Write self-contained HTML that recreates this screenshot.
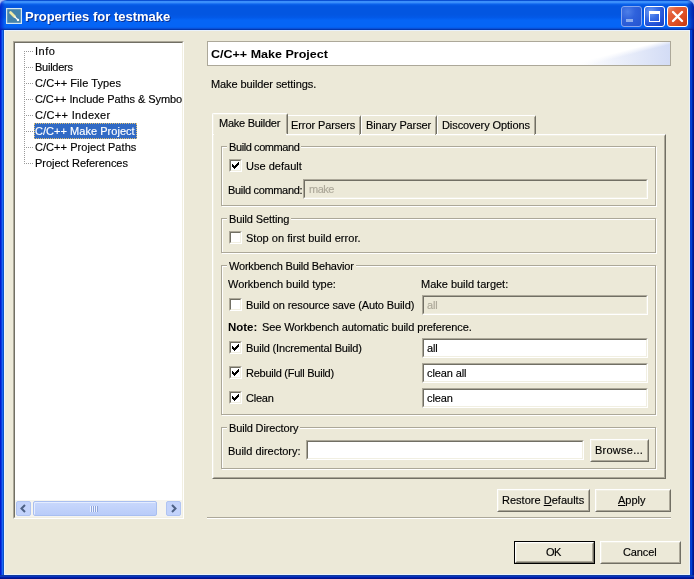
<!DOCTYPE html>
<html><head><meta charset="utf-8"><title>Properties for testmake</title>
<style>
*{box-sizing:border-box;margin:0;padding:0}
html,body{width:694px;height:579px;overflow:hidden;background:#ece9d8}
body{font-family:"Liberation Sans",sans-serif;font-size:11px;color:#000;position:relative}
.a{position:absolute}
.t{position:absolute;white-space:nowrap;line-height:13px;will-change:transform;-webkit-text-stroke:0.15px currentColor}
.ttl,.nb{-webkit-text-stroke:0}
.gl{background:#ece9d8;box-shadow:-2px 0 0 #ece9d8,2px 0 0 #ece9d8}
u{text-decoration:underline}
#tb{left:0;top:0;width:694px;height:30px;border-radius:7px 7px 0 0;background:linear-gradient(to bottom,#0a50d4 0,#0a50d4 2%,#3c90fb 5%,#3a8efa 8.5%,#1c72f2 12%,#075ee8 15.5%,#0356e1 20%,#0356e1 48%,#0359e8 58%,#0565f6 68%,#0565f6 88%,#0560ee 91.5%,#0a50d6 95%,#0033a8 99%)}
.bd{background:#0a3fd8}
.sunk{position:absolute;border:1px solid;border-color:#aca899 #fff #fff #aca899;background:#fff}
.sunk::after{content:"";position:absolute;left:0;top:0;right:0;bottom:0;border:1px solid;border-color:#716f64 #f1efe2 #f1efe2 #716f64}
.sunk.dis{background:#ece9d8}
.ge{position:absolute;border:1px solid #fff}
.ge::after{content:"";position:absolute;left:-2px;top:-2px;right:0;bottom:0;border:1px solid #aca899}
.btn{position:absolute;border:1px solid;border-color:#fff #716f64 #716f64 #fff;background:#ece9d8}
.btn::after{content:"";position:absolute;left:0;top:0;right:0;bottom:0;border:1px solid;border-color:#f1efe2 #aca899 #aca899 #f1efe2}
.wb{position:absolute;top:6px;width:21px;height:21px;border:1px solid #fff;border-radius:3px}
.wbb{background:radial-gradient(circle at 30% 25%,#6f9cf3 0%,#3a6fe6 35%,#2050d6 70%,#1a41bd 100%)}
.wbr{background:linear-gradient(135deg,#ee9675 0%,#e4603a 25%,#dd4d22 65%,#c43810 100%)}
</style></head><body>
<div class="a" style="left:0;top:0;width:694px;height:8px;background:#a9c1f6"></div>
<div class="a" id="tb"><div class="a" style="left:0;top:0;width:5px;height:30px;border-radius:7px 0 0 0;background:linear-gradient(to right,rgba(0,25,200,.75),rgba(0,25,200,0))"></div><div class="a" style="right:0;top:0;width:7px;height:30px;border-radius:0 7px 0 0;background:linear-gradient(to left,rgba(0,20,150,.8),rgba(0,20,150,0))"></div></div>
<div class="a" style="left:0;top:30px;width:4px;height:549px;background:linear-gradient(to right,#0019cf 0 1px,#0a3de0 1px 2px,#1966f4 2px 3px,#0a52c8 3px 4px)"></div>
<div class="a" style="left:690px;top:30px;width:4px;height:549px;background:linear-gradient(to right,#0a3cc8 0 1px,#003fd6 1px 2px,#0024a8 2px 3px,#00158c 3px 4px)"></div>
<div class="a" style="left:0;top:575px;width:694px;height:4px;background:linear-gradient(to bottom,#103c9e 0 1px,#0a35c0 1px 2px,#001ea8 2px 3px,#00138c 3px 4px)"></div>
<div class="a" style="left:4px;top:30px;width:686px;height:545px;border:1px solid #e9f2fd"></div>
<svg class="a" style="left:6px;top:8px" width="16" height="16" viewBox="0 0 16 16"><rect width="16" height="16" fill="#4583ab"/><rect x="0.6" y="0.6" width="14.8" height="14.8" fill="none" stroke="#d4e7ef" stroke-width="1.2"/><path d="M4.5 4.5 L8.5 8.5" stroke="#eee9a6" stroke-width="2.6" stroke-linecap="round"/><path d="M8.5 8.5 L12 12" stroke="#fff" stroke-width="1.3"/><circle cx="12" cy="12" r="1.2" fill="#fff"/></svg>
<div class="wb" style="left:621px;border-color:#86a6ee;background:radial-gradient(circle at 30% 25%,#4d7fe8 0%,#2f62dc 40%,#2454d0 100%)"><div class="a" style="left:4px;top:12px;width:7px;height:3px;background:#8eaeee"></div></div>
<div class="wb wbb" style="left:644px"><div class="a" style="left:4px;top:4px;width:11px;height:11px;border:1px solid #fff;border-top-width:3px"></div></div>
<div class="wb wbr" style="left:667px"><svg class="a" style="left:0;top:0" width="19" height="19"><path d="M5 5 L14 14 M14 5 L5 14" stroke="#fff" stroke-width="2.4" stroke-linecap="round"/></svg></div>

<!-- tree -->
<div class="sunk" style="left:13px;top:41px;width:171px;height:478px;overflow:hidden">
<div class="a" style="left:10px;top:9px;width:1px;height:113px;background:repeating-linear-gradient(to bottom,#999 0 1px,transparent 1px 2px)"></div>
<div class="a" style="left:10px;top:9px;width:9px;height:1px;background:repeating-linear-gradient(to right,#999 0 1px,transparent 1px 2px)"></div>
<div class="a" style="left:10px;top:25px;width:9px;height:1px;background:repeating-linear-gradient(to right,#999 0 1px,transparent 1px 2px)"></div>
<div class="a" style="left:10px;top:41px;width:9px;height:1px;background:repeating-linear-gradient(to right,#999 0 1px,transparent 1px 2px)"></div>
<div class="a" style="left:10px;top:57px;width:9px;height:1px;background:repeating-linear-gradient(to right,#999 0 1px,transparent 1px 2px)"></div>
<div class="a" style="left:10px;top:73px;width:9px;height:1px;background:repeating-linear-gradient(to right,#999 0 1px,transparent 1px 2px)"></div>
<div class="a" style="left:10px;top:89px;width:9px;height:1px;background:repeating-linear-gradient(to right,#999 0 1px,transparent 1px 2px)"></div>
<div class="a" style="left:10px;top:105px;width:9px;height:1px;background:repeating-linear-gradient(to right,#999 0 1px,transparent 1px 2px)"></div>
<div class="a" style="left:10px;top:121px;width:9px;height:1px;background:repeating-linear-gradient(to right,#999 0 1px,transparent 1px 2px)"></div>

<div class="a" style="left:20px;top:81px;width:103px;height:16px;background:#316ac5;border:1px dotted #e0c070"></div>
<div class="t" style="left:21.20px;top:3px;letter-spacing:0.535px;">Info</div>
<div class="t" style="left:21.20px;top:19px;letter-spacing:-0.256px;">Builders</div>
<div class="t" style="left:21.20px;top:35px;letter-spacing:0.076px;">C/C++ File Types</div>
<div class="t" style="left:21.20px;top:51px;letter-spacing:-0.077px;">C/C++ Include Paths &amp; Symbols</div>
<div class="t" style="left:21.20px;top:67px;letter-spacing:0.304px;">C/C++ Indexer</div>
<div class="t" style="left:21.20px;top:83px;letter-spacing:0.036px;color:#fff">C/C++ Make Project</div>
<div class="t" style="left:21.20px;top:99px;letter-spacing:0.059px;">C/C++ Project Paths</div>
<div class="t" style="left:21.20px;top:115px;letter-spacing:-0.036px;">Project References</div>
<!-- scrollbar -->
<div class="a" style="left:1px;top:458px;width:167px;height:17px;background:#f5f4ef"></div>
<div class="a" style="left:2px;top:459px;width:15px;height:15px;border-radius:2px;background:#c3d3fb;border:1px solid #b0c4f2"><svg class="a" style="left:0;top:0" width="13" height="13"><path d="M8 3 L4.5 6.5 L8 10" fill="none" stroke="#4d6185" stroke-width="2"/></svg></div>
<div class="a" style="left:19px;top:459px;width:124px;height:15px;border-radius:2px;background:linear-gradient(to bottom,#c9d8fc,#b9ccf9);border:1px solid #a9bff0;box-shadow:inset 1px 1px 0 #e4ecff"><div class="a" style="left:56px;top:4px;width:8px;height:6px;background:repeating-linear-gradient(to right,#eef3ff 0 1px,#8ea5dc 1px 2px)"></div></div>
<div class="a" style="left:152px;top:459px;width:15px;height:15px;border-radius:2px;background:#c3d3fb;border:1px solid #b0c4f2"><svg class="a" style="left:0;top:0" width="13" height="13"><path d="M5 3 L8.5 6.5 L5 10" fill="none" stroke="#4d6185" stroke-width="2"/></svg></div>
</div>

<!-- header -->
<div class="a" style="left:207px;top:41px;width:464px;height:25px;border:1px solid #aca899;background:linear-gradient(345.6deg,rgba(255,255,255,0) 14.5%,#fff 18.5%),linear-gradient(to right,#fff 80%,#d3dcf5 100%)"></div>

<!-- tab pane -->
<div class="a" style="left:212px;top:134px;width:454px;height:345px;border:1px solid;border-color:#fff #716f64 #716f64 #fff"></div>
<div class="a" style="left:213px;top:135px;width:452px;height:343px;border:1px solid;border-color:#f1efe2 #aca899 #aca899 #f1efe2"></div>
<!-- inactive tabs -->
<div class="a" style="left:288px;top:115px;width:73px;height:19px;border-top:1px solid #fff;border-right:1px solid #716f64;border-radius:0 2px 0 0"><div class="a" style="right:0;top:1px;width:1px;height:18px;background:#aca899"></div></div>
<div class="a" style="left:361px;top:115px;width:76px;height:19px;border-top:1px solid #fff;border-left:1px solid #fff;border-right:1px solid #716f64;border-radius:2px 2px 0 0"><div class="a" style="right:0;top:1px;width:1px;height:18px;background:#aca899"></div></div>
<div class="a" style="left:437px;top:115px;width:99px;height:19px;border-top:1px solid #fff;border-left:1px solid #fff;border-right:1px solid #716f64;border-radius:2px 2px 0 0"><div class="a" style="right:0;top:1px;width:1px;height:18px;background:#aca899"></div></div>
<!-- active tab -->
<div class="a" style="left:214px;top:134px;width:72px;height:2px;background:#ece9d8"></div>
<div class="a" style="left:212px;top:113px;width:76px;height:21px;background:#ece9d8;border-top:1px solid #fff;border-left:1px solid #fff;border-right:1px solid #716f64;border-radius:2px 2px 0 0"><div class="a" style="left:0;top:0;right:0;bottom:0;border:1px solid;border-color:#f1efe2 #aca899 transparent #f1efe2"></div></div>

<!-- groups -->
<div class="ge" style="left:222px;top:147px;width:435px;height:60px"></div>
<div class="ge" style="left:222px;top:219px;width:435px;height:35px"></div>
<div class="ge" style="left:222px;top:266px;width:435px;height:150px"></div>
<div class="ge" style="left:222px;top:428px;width:435px;height:42px"></div>

<!-- inputs -->
<div class="sunk dis" style="left:303px;top:179px;width:345px;height:20px"></div>
<div class="sunk dis" style="left:422px;top:295px;width:226px;height:20px"></div>
<div class="sunk" style="left:422px;top:338px;width:226px;height:20px"></div>
<div class="sunk" style="left:422px;top:363px;width:226px;height:20px"></div>
<div class="sunk" style="left:422px;top:388px;width:226px;height:20px"></div>
<div class="sunk" style="left:306px;top:440px;width:278px;height:20px"></div>

<!-- checkboxes -->
<div class="sunk" style="left:229px;top:159px;width:13px;height:13px"><svg class="a" style="left:2px;top:2px" width="7" height="7"><path d="M0 2 h1v1h1v1h1v-1h1v-1h1v-1h1v-1h1v3h-1v1h-1v1h-1v1h-1v1h-1v-1h-1v-1h-1z" fill="#000"/></svg></div>
<div class="sunk" style="left:229px;top:231px;width:13px;height:13px"></div>
<div class="sunk" style="left:229px;top:298px;width:13px;height:13px"></div>
<div class="sunk" style="left:229px;top:341px;width:13px;height:13px"><svg class="a" style="left:2px;top:2px" width="7" height="7"><path d="M0 2 h1v1h1v1h1v-1h1v-1h1v-1h1v-1h1v3h-1v1h-1v1h-1v1h-1v1h-1v-1h-1v-1h-1z" fill="#000"/></svg></div>
<div class="sunk" style="left:229px;top:366px;width:13px;height:13px"><svg class="a" style="left:2px;top:2px" width="7" height="7"><path d="M0 2 h1v1h1v1h1v-1h1v-1h1v-1h1v-1h1v3h-1v1h-1v1h-1v1h-1v1h-1v-1h-1v-1h-1z" fill="#000"/></svg></div>
<div class="sunk" style="left:229px;top:391px;width:13px;height:13px"><svg class="a" style="left:2px;top:2px" width="7" height="7"><path d="M0 2 h1v1h1v1h1v-1h1v-1h1v-1h1v-1h1v3h-1v1h-1v1h-1v1h-1v1h-1v-1h-1v-1h-1z" fill="#000"/></svg></div>

<!-- buttons -->
<div class="btn" style="left:590px;top:439px;width:59px;height:23px"></div>
<div class="btn" style="left:497px;top:489px;width:93px;height:23px"></div>
<div class="btn" style="left:595px;top:489px;width:76px;height:23px"></div>
<div class="a" style="left:207px;top:517px;width:464px;height:2px;border-top:1px solid #aca899;border-bottom:1px solid #fff"></div>
<div class="a" style="left:514px;top:541px;width:81px;height:23px;border:1px solid #000"></div>
<div class="btn" style="left:515px;top:542px;width:79px;height:21px"></div>
<div class="btn" style="left:600px;top:541px;width:81px;height:23px"></div>

<div class="t nb" style="left:210.80px;top:48px;transform-origin:0 0;transform:scaleX(1.1381);font-weight:bold">C/C++ Make Project</div>
<div class="t" style="left:210.80px;top:78px;letter-spacing:-0.086px;">Make builder settings.</div>
<div class="t" style="left:219.00px;top:117px;letter-spacing:-0.259px;">Make Builder</div>
<div class="t" style="left:290.80px;top:119px;letter-spacing:-0.093px;">Error Parsers</div>
<div class="t" style="left:365.60px;top:119px;letter-spacing:-0.119px;">Binary Parser</div>
<div class="t" style="left:441.80px;top:119px;letter-spacing:-0.080px;">Discovery Options</div>
<div class="t gl" style="left:228.90px;top:141px;letter-spacing:-0.410px;">Build command</div>
<div class="t" style="left:246.10px;top:160px;letter-spacing:0.013px;">Use default</div>
<div class="t" style="left:227.70px;top:184px;letter-spacing:-0.334px;">Build command:</div>
<div class="t" style="left:308.50px;top:183px;letter-spacing:-0.477px;color:#aca899">make</div>
<div class="t gl" style="left:228.90px;top:213px;letter-spacing:-0.120px;">Build Setting</div>
<div class="t" style="left:246.10px;top:232px;letter-spacing:0.033px;">Stop on first build error.</div>
<div class="t gl" style="left:228.90px;top:260px;letter-spacing:-0.197px;">Workbench Build Behavior</div>
<div class="t" style="left:228.40px;top:278px;letter-spacing:-0.040px;">Workbench build type:</div>
<div class="t" style="left:420.80px;top:278px;letter-spacing:-0.013px;">Make build target:</div>
<div class="t" style="left:246.10px;top:299px;letter-spacing:-0.121px;">Build on resource save (Auto Build)</div>
<div class="t" style="left:427.30px;top:299px;letter-spacing:-0.105px;color:#aca899">all</div>
<div class="t nb" style="left:228.40px;top:321px;transform-origin:0 0;transform:scaleX(1.0424);font-weight:bold">Note:</div>
<div class="t" style="left:262.00px;top:321px;letter-spacing:-0.100px;">See Workbench automatic build preference.</div>
<div class="t" style="left:246.10px;top:342px;letter-spacing:-0.162px;">Build (Incremental Build)</div>
<div class="t" style="left:246.10px;top:367px;letter-spacing:-0.252px;">Rebuild (Full Build)</div>
<div class="t" style="left:246.10px;top:392px;letter-spacing:-0.230px;">Clean</div>
<div class="t" style="left:427.30px;top:342px;letter-spacing:-0.105px;">all</div>
<div class="t" style="left:427.00px;top:367px;letter-spacing:-0.107px;">clean all</div>
<div class="t" style="left:427.00px;top:392px;letter-spacing:-0.079px;">clean</div>
<div class="t gl" style="left:228.90px;top:422px;letter-spacing:-0.149px;">Build Directory</div>
<div class="t" style="left:227.70px;top:445px;letter-spacing:-0.017px;">Build directory:</div>
<div class="t" style="left:594.60px;top:444px;letter-spacing:0.249px;">Browse...</div>
<div class="t" style="left:501.80px;top:494px;letter-spacing:0.016px;">Restore <u>D</u>efaults</div>
<div class="t" style="left:618.20px;top:494px;letter-spacing:-0.006px;"><u>A</u>pply</div>
<div class="t" style="left:546.00px;top:546px;letter-spacing:-0.453px;">OK</div>
<div class="t" style="left:622.80px;top:546px;letter-spacing:-0.108px;">Cancel</div>
<div class="t ttl" style="left:25.40px;top:9px;letter-spacing:0.003px;font-weight:bold;font-size:13px;line-height:16px;color:#fff;text-shadow:1px 1px 0 #0b2f8f">Properties for testmake</div>
</body></html>
